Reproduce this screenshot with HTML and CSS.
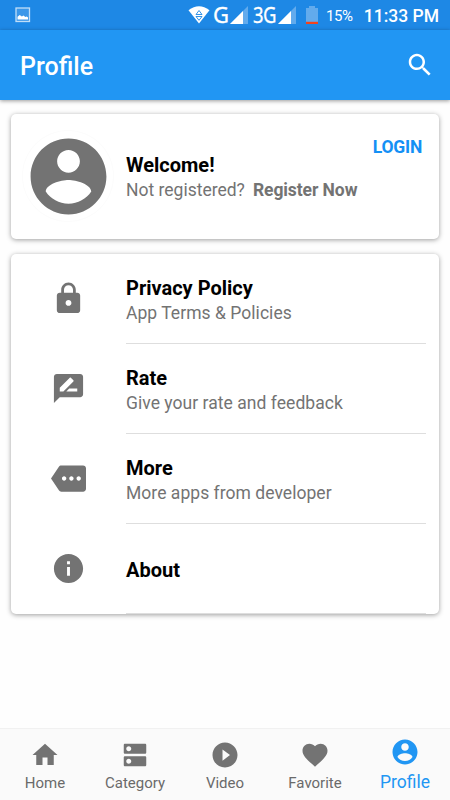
FILE: index.html
```html
<!DOCTYPE html>
<html lang="en">
<head>
<meta charset="utf-8">
<title>Profile</title>
<link rel="stylesheet" href="styles.css">
</head>
<body>
<div class="screen">
  <div class="status">
    <svg class="shot" viewBox="0 0 16 16"><rect x="1" y="1" width="13.5" height="13.5" fill="#3b97e9" stroke="#c0def8" stroke-width="1.3"/><path d="M2.500 12.500V9.800l2.200-1.900 2.200 1.700 1.500-1.200 2 1.700 1.300-.6 1.300 1.100v1.900z" fill="#fff"/></svg>
    <svg class="wifi" viewBox="0 0 22 18"><path d="M.5 4.200Q11-3.800 21.500 4.200L11 17.500z" fill="#fff"/><path d="M8 8.500l3-4 3 4zM8 10.500h6l-3 3.800z" fill="none" stroke="#1e88e5" stroke-width=".9"/></svg>
    <span class="net net-g">G</span>
    <svg class="signal" viewBox="0 0 18 18"><path d="M0 18L18 0v18z" fill="#62abed"/><path d="M0 18L13 5v13z" fill="#fff"/></svg>
    <span class="net net-3g">3G</span>
    <svg class="signal" viewBox="0 0 18 18"><path d="M0 18L18 0v18z" fill="#62abed"/><path d="M0 18L13 5v13z" fill="#fff"/></svg>
    <svg class="battery" viewBox="0 0 12 18"><path d="M0 2h3V0h6v2h3v16H0z" fill="#62abed"/><path d="M0 15.800h12V18H0z" fill="#f4431c"/></svg>
    <span class="percent">15%</span>
    <span class="clock">11:33 PM</span>
  </div>
  <header class="bar">
    <h1 class="title">Profile</h1>
    <svg class="search" viewBox="0 0 24 24"><path d="M15.500 14h-.79l-.28-.27C15.410 12.590 16 11.110 16 9.500 16 5.910 13.090 3 9.500 3S3 5.910 3 9.500 5.910 16 9.500 16c1.610 0 3.090-.59 4.230-1.570l.27.28v.79l5 4.990L20.490 19l-4.990-5zm-6 0C7.010 14 5 11.990 5 9.500S7.010 5 9.500 5 14 7.010 14 9.500 11.990 14 9.500 14z"/></svg>
  </header>
  <main class="content">
    <section class="card user">
      <div class="avatar"><svg viewBox="0 0 24 24"><path d="M12 2C6.480 2 2 6.480 2 12s4.480 10 10 10 10-4.480 10-10S17.520 2 12 2zm0 3c1.660 0 3 1.340 3 3s-1.340 3-3 3-3-1.340-3-3 1.340-3 3-3zm0 14.200c-2.500 0-4.710-1.280-6-3.220.03-1.990 4-3.080 6-3.080 1.990 0 5.970 1.090 6 3.080-1.290 1.940-3.500 3.220-6 3.220z"/></svg></div>
      <div class="welcome">
        <div class="head">Welcome!</div>
        <div class="sub">Not registered?<b class="register">Register Now</b></div>
      </div>
      <div class="login">LOGIN</div>
    </section>
    <section class="card menu">
      <div class="row">
        <div class="icon"><svg viewBox="0 0 24 24"><path d="M18 8h-1V6c0-2.760-2.240-5-5-5S7 3.240 7 6v2H6c-1.100 0-2 .9-2 2v10c0 1.100.9 2 2 2h12c1.100 0 2-.9 2-2V10c0-1.100-.9-2-2-2zm-6 9c-1.100 0-2-.9-2-2s.9-2 2-2 2 .9 2 2-.9 2-2 2zm3.100-9H8.900V6c0-1.710 1.390-3.100 3.100-3.100 1.710 0 3.100 1.390 3.100 3.100v2z"/></svg></div>
        <div class="text"><div class="head">Privacy Policy</div><div class="sub">App Terms &amp; Policies</div></div>
      </div>
      <div class="row">
        <div class="icon"><svg viewBox="0 0 24 24"><path d="M20 2H4c-1.100 0-1.990.9-1.990 2L2 22l4-4h14c1.100 0 2-.9 2-2V4c0-1.100-.9-2-2-2zM6 14v-2.470l6.880-6.880c.2-.2.510-.2.710 0l1.770 1.770c.2.2.2.510 0 .71L8.470 14H6zm12 0h-7.500l2-2H18v2z"/></svg></div>
        <div class="text"><div class="head">Rate</div><div class="sub">Give your rate and feedback</div></div>
      </div>
      <div class="row">
        <div class="icon"><svg viewBox="0 0 24 24"><path d="M22 3H7c-.69 0-1.230.35-1.590.88L0 12l5.410 8.110c.36.53.97.89 1.660.89H22c1.100 0 2-.9 2-2V5c0-1.100-.9-2-2-2zM9 13.500c-.83 0-1.500-.67-1.500-1.500s.67-1.500 1.500-1.500 1.500.67 1.500 1.500-.67 1.500-1.500 1.500zm5 0c-.83 0-1.500-.67-1.500-1.500s.67-1.500 1.500-1.500 1.500.67 1.500 1.500-.67 1.500-1.500 1.500zm5 0c-.83 0-1.500-.67-1.500-1.500s.67-1.500 1.500-1.500 1.500.67 1.500 1.500-.67 1.500-1.500 1.500z"/></svg></div>
        <div class="text"><div class="head">More</div><div class="sub">More apps from developer</div></div>
      </div>
      <div class="row">
        <div class="icon"><svg viewBox="0 0 24 24"><path d="M12 2C6.480 2 2 6.480 2 12s4.480 10 10 10 10-4.480 10-10S17.520 2 12 2zm1 15h-2v-6h2v6zm0-8h-2V7h2v2z"/></svg></div>
        <div class="text single"><div class="head">About</div></div>
      </div>
    </section>
  </main>
  <nav class="nav">
    <div class="tab"><svg viewBox="0 0 24 24"><path d="M10 20v-6h4v6h5v-8h3L12 3 2 12h3v8z"/></svg><span>Home</span></div>
    <div class="tab"><svg viewBox="0 0 24 24"><path d="M20 13H4c-.55 0-1 .45-1 1v6c0 .55.45 1 1 1h16c.55 0 1-.45 1-1v-6c0-.55-.45-1-1-1zM7 19c-1.100 0-2-.9-2-2s.9-2 2-2 2 .9 2 2-.9 2-2 2zM20 3H4c-.55 0-1 .45-1 1v6c0 .55.45 1 1 1h16c.55 0 1-.45 1-1V4c0-.55-.45-1-1-1zM7 9c-1.100 0-2-.9-2-2s.9-2 2-2 2 .9 2 2-.9 2-2 2z"/></svg><span>Category</span></div>
    <div class="tab"><svg viewBox="0 0 24 24"><path d="M12 2C6.480 2 2 6.480 2 12s4.480 10 10 10 10-4.480 10-10S17.520 2 12 2zm-2 14.500v-9l6 4.500-6 4.500z"/></svg><span>Video</span></div>
    <div class="tab"><svg viewBox="0 0 24 24"><path d="M12 21.350l-1.450-1.320C5.400 15.360 2 12.280 2 8.500 2 5.420 4.420 3 7.500 3c1.740 0 3.410.81 4.500 2.090C13.090 3.810 14.760 3 16.500 3 19.580 3 22 5.420 22 8.500c0 3.780-3.400 6.860-8.550 11.540L12 21.350z"/></svg><span>Favorite</span></div>
    <div class="tab active"><svg viewBox="0 0 24 24"><path d="M12 2C6.480 2 2 6.480 2 12s4.480 10 10 10 10-4.480 10-10S17.520 2 12 2zm0 3c1.660 0 3 1.340 3 3s-1.340 3-3 3-3-1.340-3-3 1.340-3 3-3zm0 14.200c-2.500 0-4.710-1.280-6-3.220.03-1.990 4-3.080 6-3.080 1.990 0 5.970 1.090 6 3.080-1.290 1.940-3.500 3.220-6 3.220z"/></svg><span>Profile</span></div>
  </nav>
</div>
</body>
</html>
```
FILE: styles.css
```css
* { box-sizing: border-box; }
body { margin: 0; font-family: Roboto, "Liberation Sans", sans-serif; }
svg { display: block; flex: none; fill: #737373; }
.screen { width: 450px; height: 800px; display: flex; flex-direction: column; background: #fefefe; overflow: hidden; }
.status { height: 30px; flex: none; display: flex; align-items: center; background: #1e88e5; color: #fff; padding: 0 11px 0 15px; white-space: nowrap; }
.shot { width: 16px; height: 16px; }
.wifi { width: 22px; height: 18px; margin-left: 157px; }
.net { font-family: "Noto Sans", sans-serif; font-size: 22px; line-height: 28px; height: 30px; flex: none; -webkit-text-stroke: .3px #fff; }
.net-g { width: 17px; margin-left: 3px; }
.net-3g { width: 29px; margin-left: 5px; letter-spacing: -.8px; transform: scaleX(.84); transform-origin: left; margin-right: -4px; }
.signal { width: 18px; height: 18px; }
.battery { width: 12px; height: 18px; margin-left: 10px; }
.percent { font-size: 15px; margin-left: 8px; width: 38px; padding-top: 1px; letter-spacing: -.4px; }
.clock { font-size: 17.5px; font-weight: 500; margin-left: auto; padding-top: 2px; }
.bar { height: 70px; flex: none; display: flex; align-items: center; justify-content: space-between; padding: 0 15px 0 20px; background: #2196f3; box-shadow: 0 1px 4px rgba(0,0,0,.4); }
.title { margin: 0; font-size: 25px; font-weight: 500; line-height: 30px; color: #fff; padding-top: 3px; }
.search { width: 30px; height: 30px; fill: #fff; }
.content { flex: 1; padding: 14px 11px 0; display: flex; flex-direction: column; gap: 15px; }
.card { background: #fff; border-radius: 5px; box-shadow: 0 1px 5px rgba(0,0,0,.38); }
.user { height: 125px; display: flex; align-items: center; }
.avatar { width: 90px; height: 90px; margin: 0 0 2px 12px; border-radius: 50%; box-shadow: 0 0 0 1px #fcfcfc; }
.avatar svg { width: 91px; height: 91px; }
.welcome { margin-left: 13px; flex: 1; }
.head { font-size: 20px; font-weight: 700; line-height: 26px; color: #000; }
.sub { font-size: 17.5px; line-height: 24px; color: #737373; }
.menu .sub { letter-spacing: .04px; }
.register { font-weight: 700; margin-left: 8px; letter-spacing: -.08px; }
.login { align-self: flex-start; margin: 23px 17px 0 0; font-size: 17.5px; line-height: 21px; font-weight: 700; letter-spacing: -.25px; color: #1490f5; }
.menu { height: 360px; }
.row { height: 90px; display: flex; padding-right: 13px; }
.icon { width: 115px; display: flex; align-items: center; justify-content: center; padding-bottom: 1px; }
.icon svg { width: 35px; height: 35px; }
.text { flex: 1; border-bottom: 1px solid #dedede; padding-top: 21px; }
.single { padding-top: 33px; }
.nav { height: 72px; flex: none; display: flex; background: #fafafa; border-top: 1px solid #f1f1f1; }
.tab { width: 90px; display: flex; flex-direction: column; align-items: center; padding-top: 11px; font-size: 15px; line-height: 18px; color: #6a6a6a; }
.tab svg { width: 30px; height: 30px; }
.tab span { margin-top: 4px; }
.tab.active { padding-top: 8px; font-size: 17.5px; color: #2196f3; }
.tab.active svg { fill: #2196f3; }
.tab.active span { margin-top: 6px; }
```
